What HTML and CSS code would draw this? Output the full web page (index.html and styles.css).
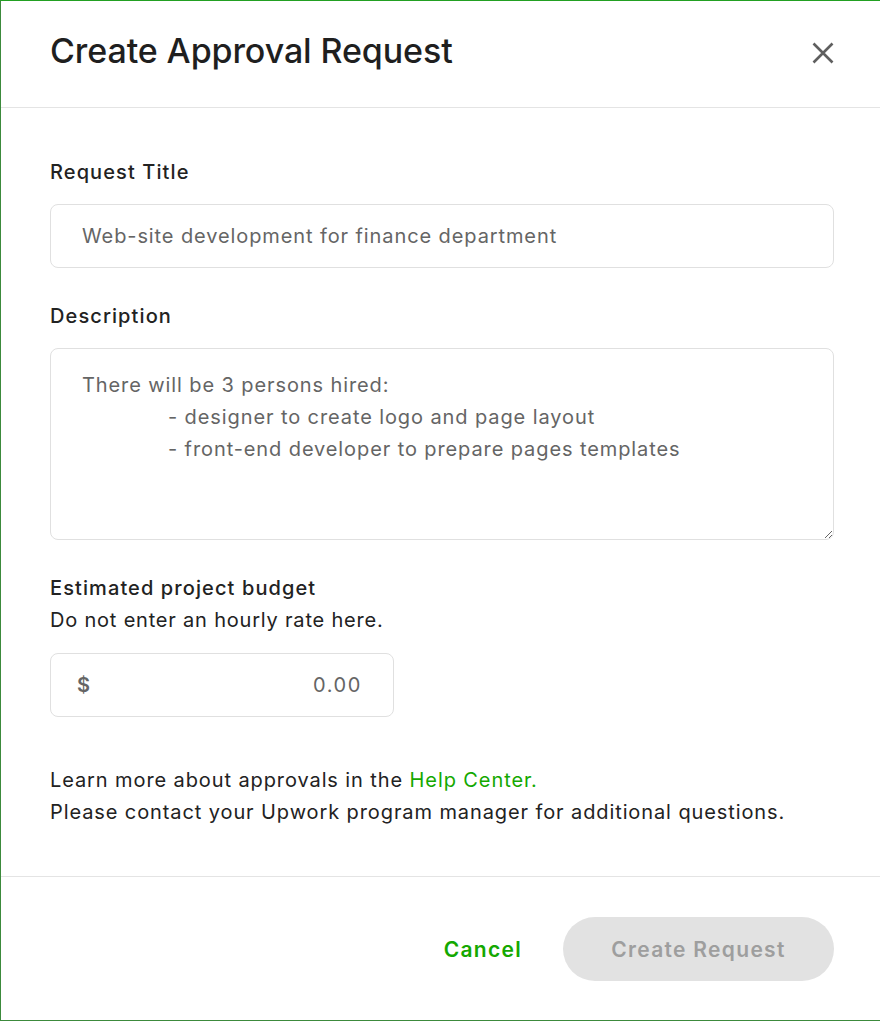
FILE: index.html
```html
<!DOCTYPE html>
<html lang="en">
<head>
  <meta charset="UTF-8" />
  <meta name="viewport" content="width=device-width, initial-scale=1.0"/>
  <title>Create Approval Request</title>
  <link rel="stylesheet" href="styles.css">
</head>
<body>
  <div class="modal">
    <div class="modal-header">
      <h1>Create Approval Request</h1>
      <button class="close" aria-label="Close">
        <svg width="22" height="22" viewBox="0 0 22 22">
          <path d="M1.5 1.5 L20.5 20.5 M20.5 1.5 L1.5 20.5" stroke="#5f5f5f" stroke-width="2.6" fill="none"/>
        </svg>
      </button>
    </div>

    <form class="modal-body">
      <label class="label" for="title">Request Title</label>
      <input type="text" id="title" class="field" value="Web-site development for finance department" />

      <label class="label gap" for="desc">Description</label>
      <textarea id="desc" class="field area">There will be 3 persons hired:
&#9;- designer to create logo and page layout
&#9;- front-end developer to prepare pages templates</textarea>

      <div class="label gap">Estimated project budget</div>
      <div class="hint">Do not enter an hourly rate here.</div>
      <div class="money">
        <span class="currency">$</span>
        <input type="text" class="amount" value="0.00" />
      </div>

      <p class="help">
        Learn more about approvals in the <a href="#">Help Center.</a><br>
        Please contact your Upwork program manager for additional questions.
      </p>
    </form>

    <div class="modal-footer">
      <button class="btn-link">Cancel</button>
      <button class="btn-primary" disabled>Create Request</button>
    </div>
  </div>
</body>
</html>
```

FILE: styles.css
```css
body {
  margin: 0;
  font-family: Inter, 'Liberation Sans', sans-serif;
  color: #222;
  background: #fff;
}

.modal {
  height: 1021px;
  box-sizing: border-box;
  border-top: 1px solid #22a022;
  border-left: 1px solid #3c8a3c;
  border-bottom: 1px solid #3c8a3c;
  display: flex;
  flex-direction: column;
}

.modal-header {
  display: flex;
  align-items: center;
  justify-content: space-between;
  padding: 30px 46px 36px 49px;
  border-bottom: 1px solid #e4e4e4;
}

h1 {
  margin: 0;
  font-size: 34px;
  line-height: 40px;
  font-weight: 500;
  letter-spacing: -0.1px;
  color: #1f1f1f;
}

.close {
  border: none;
  background: none;
  padding: 0;
  width: 22px;
  height: 22px;
  margin-top: 4px;
  cursor: pointer;
}

.close svg {
  display: block;
}

.modal-body {
  display: flex;
  flex-direction: column;
  padding: 48px 46px 48px 49px;
  border-bottom: 1px solid #e4e4e4;
}

.label {
  font-size: 20px;
  line-height: 32px;
  font-weight: 500;
  letter-spacing: 1.1px;
  color: #222;
  margin-bottom: 16px;
}

.label.gap {
  margin-top: 32px;
}

.hint {
  font-size: 20px;
  line-height: 32px;
  letter-spacing: 0.8px;
  margin-top: -16px;
  margin-bottom: 17px;
}

.field {
  box-sizing: border-box;
  width: 100%;
  height: 64px;
  padding: 0 31px;
  border: 1px solid #e0e0e0;
  border-radius: 8px;
  font-family: inherit;
  font-size: 20px;
  letter-spacing: 0.9px;
  color: #656565;
  outline: none;
}

.area {
  height: 192px;
  padding: 20px 31px;
  line-height: 32px;
  tab-size: 86px;
  resize: vertical;
}

.money {
  box-sizing: border-box;
  width: 344px;
  height: 64px;
  display: flex;
  align-items: center;
  padding: 0 31px 0 26px;
  border: 1px solid #e0e0e0;
  border-radius: 8px;
}

.currency {
  font-size: 20px;
  font-weight: 600;
  color: #656565;
}

.amount {
  flex: 1;
  min-width: 0;
  border: none;
  outline: none;
  padding: 0;
  text-align: right;
  font-family: inherit;
  font-size: 20px;
  letter-spacing: 1.6px;
  color: #656565;
}

.help {
  margin: 47px 0 0;
  font-size: 20px;
  line-height: 32px;
  letter-spacing: 0.9px;
  color: #222;
}

.help a {
  color: #14a800;
  text-decoration: none;
}

.modal-footer {
  display: flex;
  justify-content: flex-end;
  align-items: center;
  padding: 40px 46px 0 0;
}

.btn-link {
  border: none;
  background: none;
  padding: 0;
  margin-right: 41px;
  font-family: inherit;
  font-size: 21px;
  font-weight: 600;
  letter-spacing: 1.3px;
  color: #14a800;
  cursor: pointer;
}

.btn-primary {
  width: 271px;
  height: 64px;
  border: none;
  border-radius: 32px;
  background: #e2e2e2;
  color: #9e9e9e;
  font-family: inherit;
  font-size: 21px;
  font-weight: 600;
  letter-spacing: 1.3px;
}
```
